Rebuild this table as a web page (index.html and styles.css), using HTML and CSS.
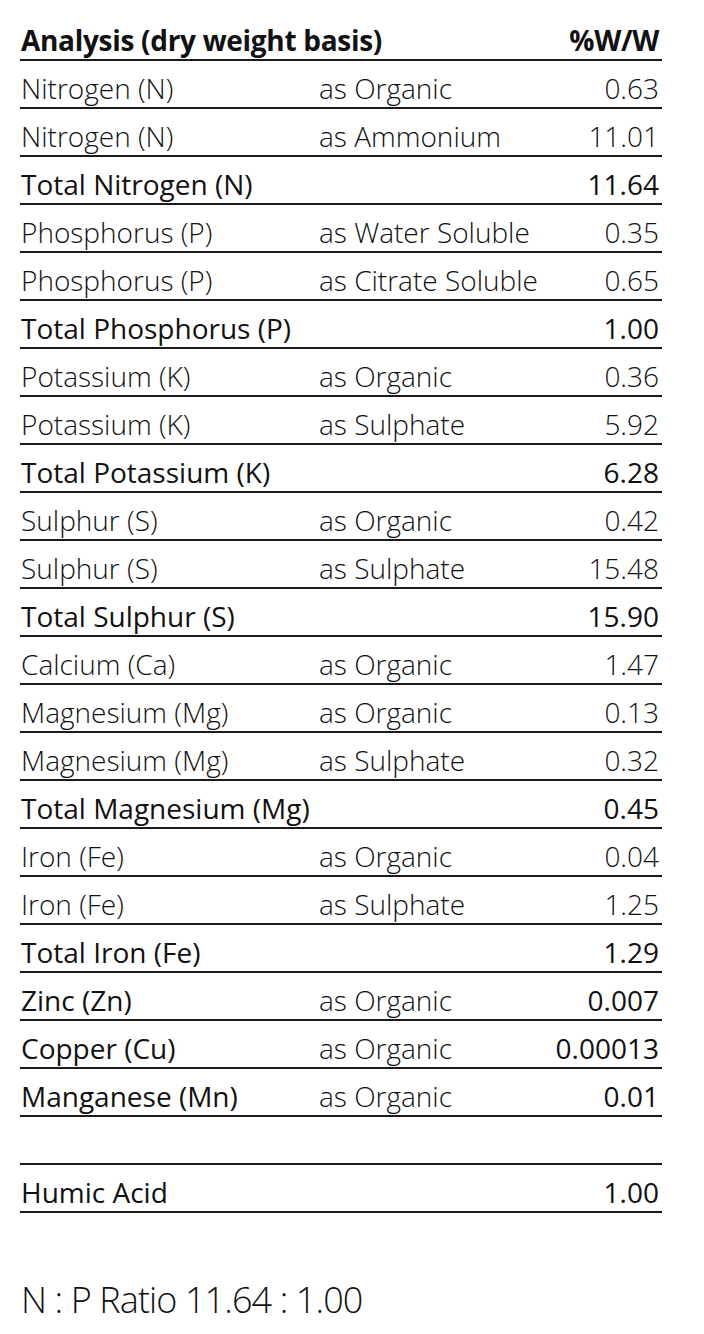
FILE: index.html
```html
<!DOCTYPE html>
<html>
<head>
<meta charset="utf-8">
<link rel="stylesheet" href="styles.css">
</head>
<body>
<div class="sheet">
  <div class="table">
    <div class="row head"><span class="c1">Analysis (dry weight basis)</span><span class="c2"></span><span class="c3">%W/W</span></div>
    <div class="row"><span class="c1">Nitrogen (N)</span><span class="c2">as Organic</span><span class="c3">0.63</span></div>
    <div class="row"><span class="c1">Nitrogen (N)</span><span class="c2">as Ammonium</span><span class="c3">11.01</span></div>
    <div class="row total"><span class="c1">Total Nitrogen (N)</span><span class="c2"></span><span class="c3">11.64</span></div>
    <div class="row"><span class="c1">Phosphorus (P)</span><span class="c2">as Water Soluble</span><span class="c3">0.35</span></div>
    <div class="row"><span class="c1">Phosphorus (P)</span><span class="c2">as Citrate Soluble</span><span class="c3">0.65</span></div>
    <div class="row total"><span class="c1">Total Phosphorus (P)</span><span class="c2"></span><span class="c3">1.00</span></div>
    <div class="row"><span class="c1">Potassium (K)</span><span class="c2">as Organic</span><span class="c3">0.36</span></div>
    <div class="row"><span class="c1">Potassium (K)</span><span class="c2">as Sulphate</span><span class="c3">5.92</span></div>
    <div class="row total"><span class="c1">Total Potassium (K)</span><span class="c2"></span><span class="c3">6.28</span></div>
    <div class="row"><span class="c1">Sulphur (S)</span><span class="c2">as Organic</span><span class="c3">0.42</span></div>
    <div class="row"><span class="c1">Sulphur (S)</span><span class="c2">as Sulphate</span><span class="c3">15.48</span></div>
    <div class="row total"><span class="c1">Total Sulphur (S)</span><span class="c2"></span><span class="c3">15.90</span></div>
    <div class="row"><span class="c1">Calcium (Ca)</span><span class="c2">as Organic</span><span class="c3">1.47</span></div>
    <div class="row"><span class="c1">Magnesium (Mg)</span><span class="c2">as Organic</span><span class="c3">0.13</span></div>
    <div class="row"><span class="c1">Magnesium (Mg)</span><span class="c2">as Sulphate</span><span class="c3">0.32</span></div>
    <div class="row total"><span class="c1">Total Magnesium (Mg)</span><span class="c2"></span><span class="c3">0.45</span></div>
    <div class="row"><span class="c1">Iron (Fe)</span><span class="c2">as Organic</span><span class="c3">0.04</span></div>
    <div class="row"><span class="c1">Iron (Fe)</span><span class="c2">as Sulphate</span><span class="c3">1.25</span></div>
    <div class="row total"><span class="c1">Total Iron (Fe)</span><span class="c2"></span><span class="c3">1.29</span></div>
    <div class="row total"><span class="c1">Zinc (Zn)</span><span class="c2">as Organic</span><span class="c3">0.007</span></div>
    <div class="row total"><span class="c1">Copper (Cu)</span><span class="c2">as Organic</span><span class="c3">0.00013</span></div>
    <div class="row total"><span class="c1">Manganese (Mn)</span><span class="c2">as Organic</span><span class="c3">0.01</span></div>
    <div class="row spacer"></div>
    <div class="row total"><span class="c1">Humic Acid</span><span class="c2"></span><span class="c3">1.00</span></div>
  </div>
  <p class="ratio">N : P Ratio 11.64 : 1.00</p>
</div>
</body>
</html>
```

FILE: styles.css
```css
html, body {
  margin: 0;
  padding: 0;
  background: #ffffff;
}

body {
  font-family: "Open Sans", "Liberation Sans", sans-serif;
  color: #111111;
}

.sheet {
  width: 642px;
  padding: 13px 0 0 20px;
}

.table {
  display: flex;
  flex-direction: column;
}

.row {
  display: grid;
  grid-template-columns: 299px 1fr auto;
  align-items: center;
  padding-top: 7px;
  box-sizing: border-box;
  height: 48px;
  border-bottom: 2px solid #1a1a1a;
  font-size: 28px;
  font-weight: 300;
  letter-spacing: 0;
  line-height: 1;
}

.c1 { padding-left: 1px; white-space: nowrap; }
.c2 { white-space: nowrap; }
.c3 { text-align: right; padding-right: 3px; white-space: nowrap; }

.row.total .c1,
.row.total .c3 {
  font-weight: 500;
}

.row.head .c1,
.row.head .c3 {
  font-weight: 700;
  letter-spacing: -0.3px;
}

.ratio {
  margin: 69px 0 0 1px;
  font-size: 36px;
  font-weight: 300;
  letter-spacing: -0.9px;
  line-height: 1;
}
```
